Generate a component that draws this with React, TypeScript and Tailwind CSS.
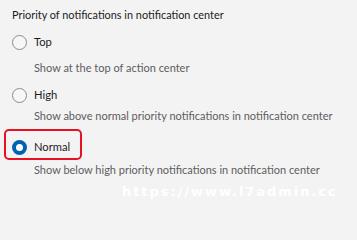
import React from 'react';

interface OptionProps {
    label: string;
    description: string;
    checked?: boolean;
    descGap: string;
}

const Radio: React.FC<{ checked?: boolean }> = ({ checked }) =>
    checked ? (
        <span className="flex h-[15px] w-[15px] shrink-0 items-center justify-center rounded-full bg-[#0063b1]">
            <span className="h-[7px] w-[7px] rounded-full bg-white" />
        </span>
    ) : (
        <span className="h-[15px] w-[15px] shrink-0 rounded-full border border-[#8b8b8b] bg-[#f7f7f7]" />
    );

const Option: React.FC<OptionProps> = ({ label, description, checked, descGap }) => (
    <div className="flex flex-col">
        <div
            className={
                checked
                    ? 'ml-[4px] flex h-[31px] w-[78px] items-center gap-[7px] rounded-[5px] border-2 border-[#e81123] pl-[6px] pt-[5px]'
                    : 'flex h-[20px] items-center gap-[7px] pl-[12px]'
            }
        >
            <Radio checked={checked} />
            <span className="text-[11.2px] leading-[16px] text-[#1b1b1b]">{label}</span>
        </div>
        <p className={`${descGap} pl-[34px] text-[11px] leading-[16px] text-[#5d5d5d]`}>{description}</p>
    </div>
);

export default function App() {
    return (
        <div
            className="relative h-screen min-h-[206px] w-full overflow-hidden bg-[#f3f3f3]"
            style={{ fontFamily: 'Lato, "Noto Sans", sans-serif' }}
        >
            <div className="flex flex-col">
                <h1 className="pl-[12px] pt-[7px] text-[10.9px] leading-[16px] text-[#1b1b1b]">
                    Priority of notifications in notification center
                </h1>
                <div className="mt-[9px]">
                    <Option label="Top" description="Show at the top of action center" descGap="mt-[8px]" />
                </div>
                <div className="mt-[9px]">
                    <Option
                        label="High"
                        description="Show above normal priority notifications in notification center"
                        descGap="mt-[3px]"
                    />
                </div>
                <div className="mt-[5px]">
                    <Option
                        label="Normal"
                        description="Show below high priority notifications in notification center"
                        descGap="mt-[2px]"
                        checked
                    />
                </div>
            </div>
            <span
                className="absolute left-[122px] top-[184px] text-[13px] font-bold leading-[16px] tracking-[1.95px] text-white"
                style={{ fontFamily: '"DejaVu Sans", Verdana, sans-serif' }}
            >
                https://www.l7admin.cc
            </span>
        </div>
    );
}
